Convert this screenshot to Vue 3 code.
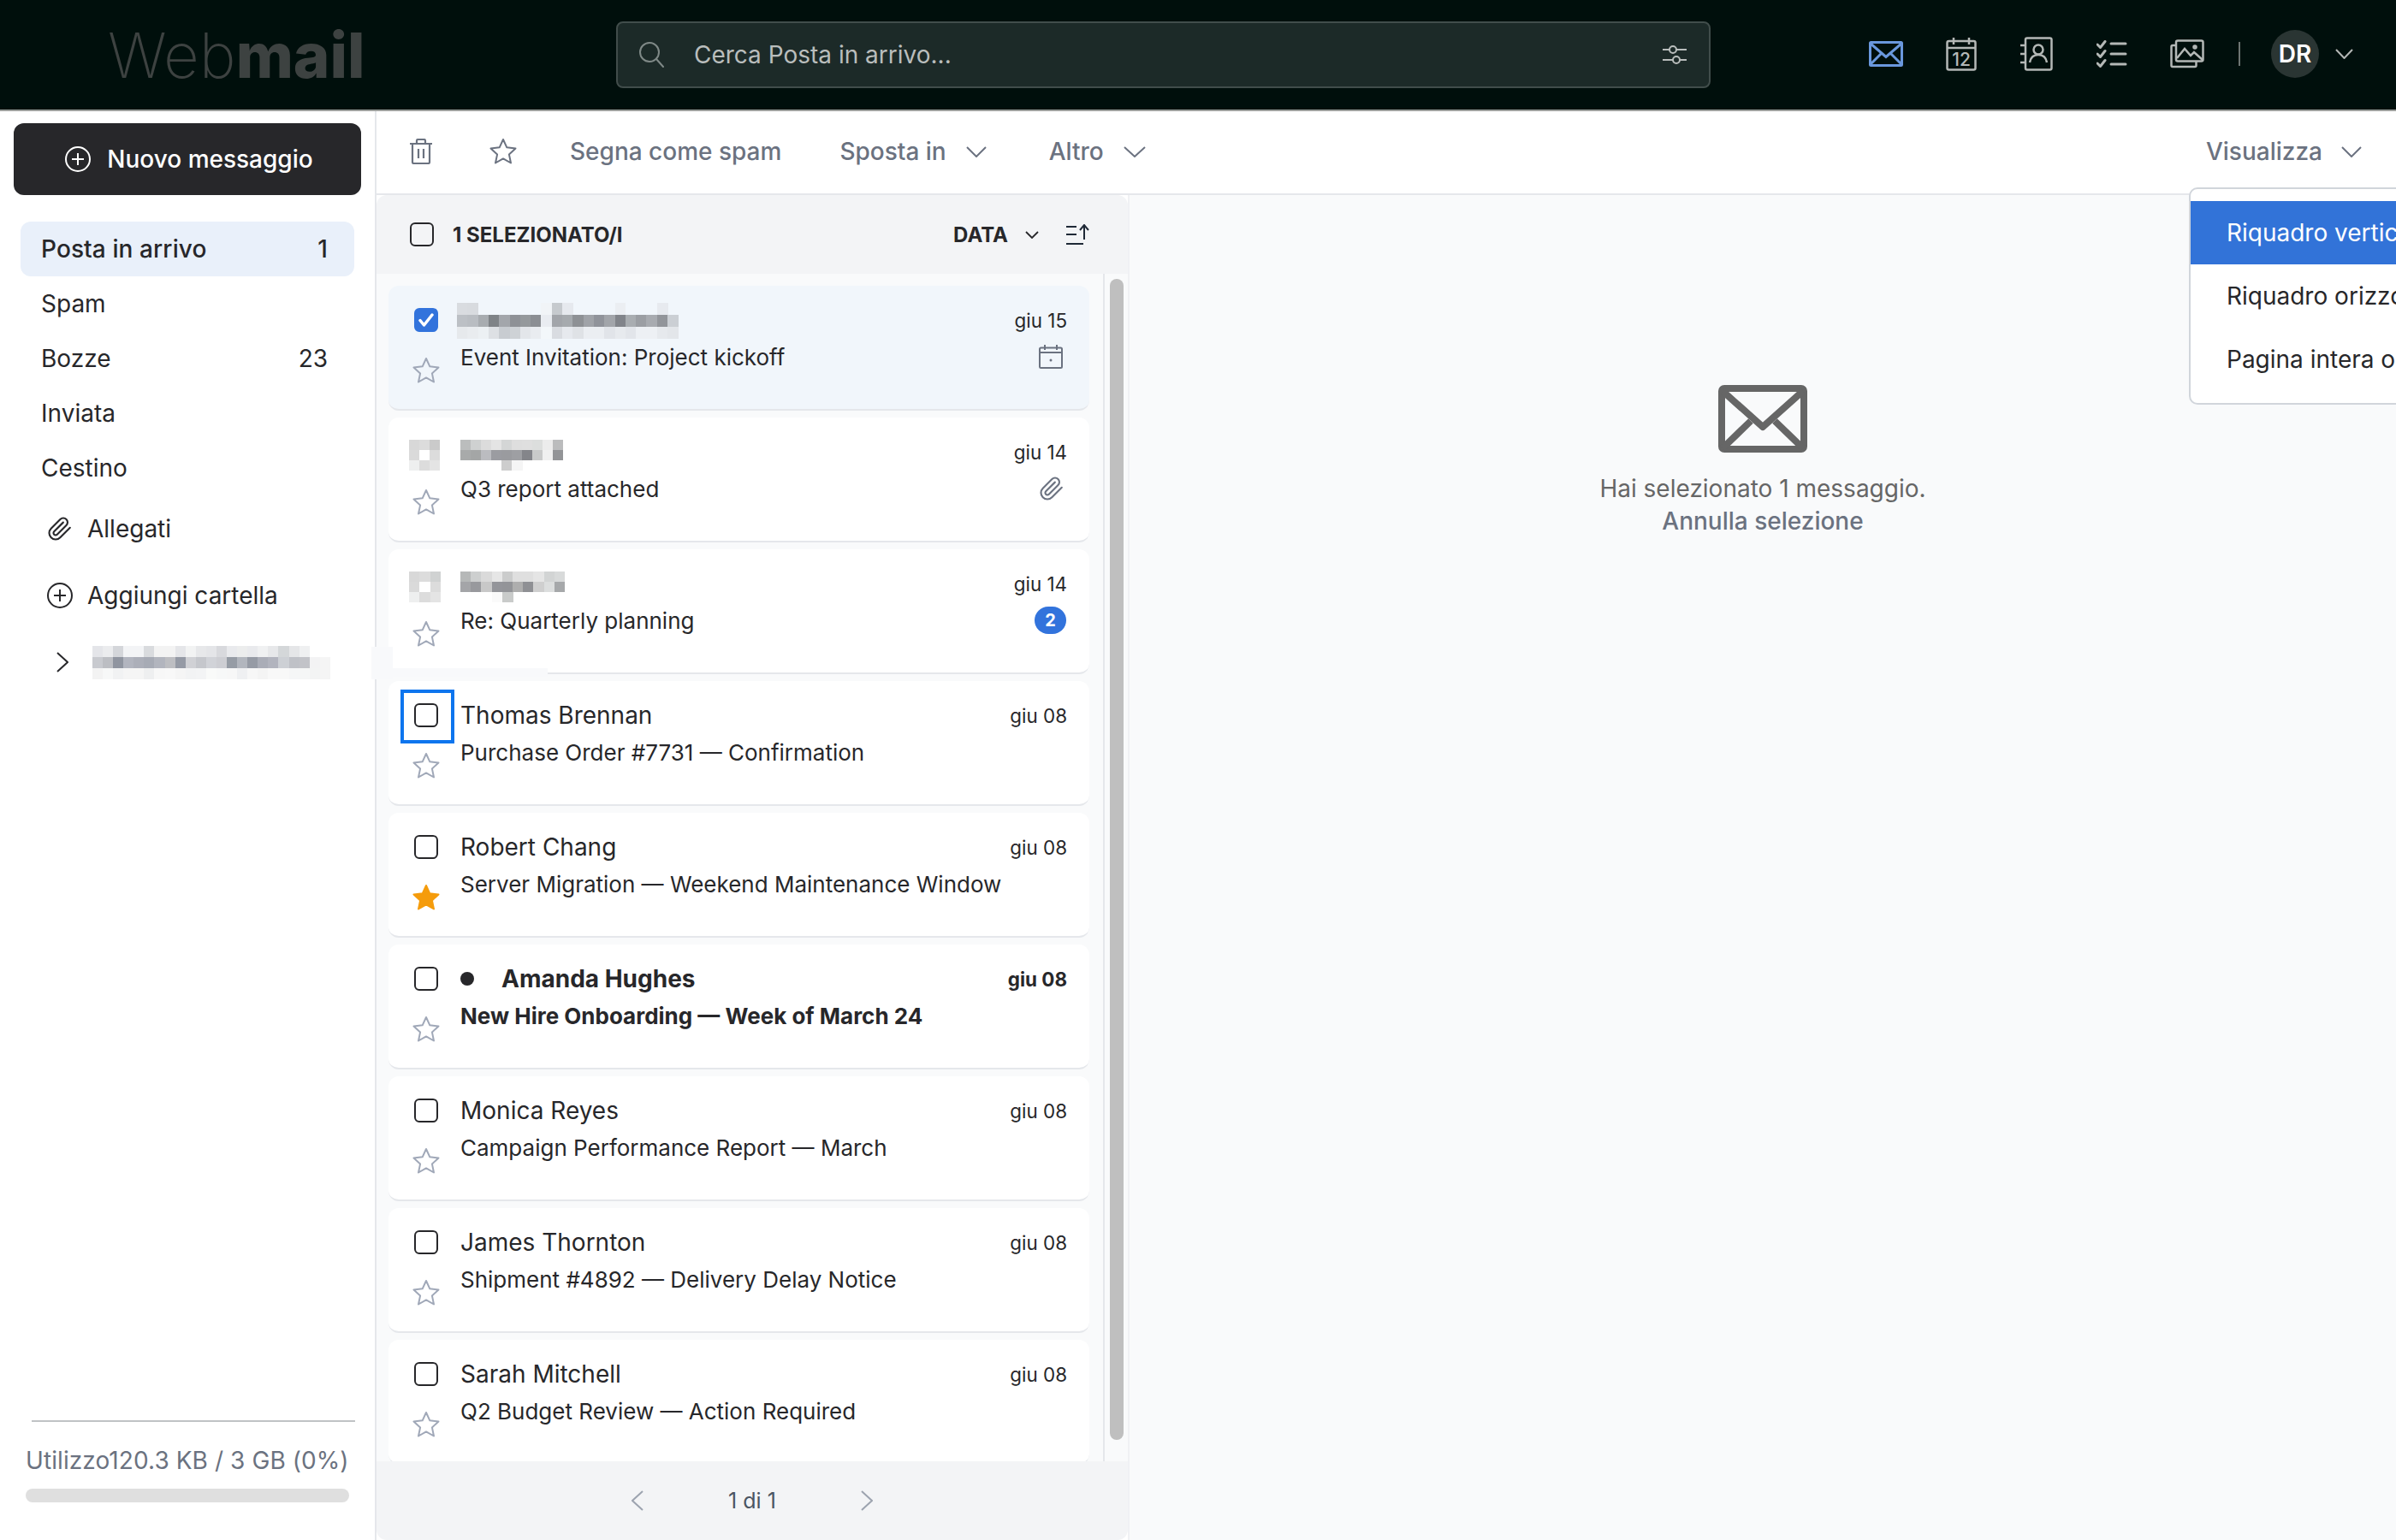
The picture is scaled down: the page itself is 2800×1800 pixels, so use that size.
<template>
  <div class="app">
    <header class="topbar">
      <div class="logo"><span class="logo-thin">Web</span><span class="logo-bold">mail</span></div>
      <div class="search">
        <svg class="search-icon" width="30" height="30" viewBox="0 0 30 30" fill="none" stroke="#7f8987" stroke-width="2">
          <circle cx="13" cy="12" r="11" />
          <path d="M21 20l8 9" stroke-linecap="round" />
        </svg>
        <span class="search-text">Cerca Posta in arrivo...</span>
        <svg class="filter-icon" width="28" height="28" viewBox="0 0 28 28" fill="none" stroke="#b9bdbc" stroke-width="2">
          <path d="M0 8h8M16 8h12M0 20h12M20 20h8" />
          <circle cx="12" cy="8" r="4" />
          <circle cx="16" cy="20" r="4" />
        </svg>
      </div>
      <div class="apps">
        <div class="app-cell">
          <svg width="40" height="30" viewBox="0 0 40 30" fill="none" stroke="#6a98dd" stroke-width="3">
            <rect x="1.5" y="1.500" width="37" height="27" rx="1" />
            <path d="M2 3l18 15.500L38 3M2 27l13-13M38 27L25 14" />
          </svg>
        </div>
        <div class="app-cell">
          <svg width="36" height="40" viewBox="0 0 36 40" fill="none" stroke="#b4b8b6" stroke-width="2.500">
            <rect x="1.500" y="5" width="33" height="33.500" rx="2" />
            <path d="M1.500 13h33M9 1v8M27 1v8" />
            <text x="18" y="34" class="cal-num" text-anchor="middle">12</text>
          </svg>
        </div>
        <div class="app-cell">
          <svg width="38" height="40" viewBox="0 0 38 40" fill="none" stroke="#b4b8b6" stroke-width="2.500">
            <rect x="6" y="1.500" width="30.500" height="37" rx="2" />
            <path d="M0 10h6M0 20h6M0 30h6" />
            <circle cx="21" cy="15" r="5.500" />
            <path d="M11 30c1-6 5-9 10-9s9 3 10 9" />
          </svg>
        </div>
        <div class="app-cell">
          <svg width="36" height="32" viewBox="0 0 36 32" fill="none" stroke="#b4b8b6" stroke-width="3" stroke-linecap="round" stroke-linejoin="round">
            <path d="M1 5l3.500 3.500L10 1.500M1 16l3.500 3.500L10 12.500M1 27l3.500 3.500L10 23.500" />
            <path d="M17 4h17M17 16h17M17 28h17" />
          </svg>
        </div>
        <div class="app-cell">
          <svg width="40" height="34" viewBox="0 0 40 34" fill="none" stroke="#b4b8b6" stroke-width="2.500">
            <rect x="7" y="1.500" width="31.500" height="24" rx="2" />
            <path d="M7 7H3a1.500 1.500 0 0 0-1.500 1.500v22A1.500 1.500 0 0 0 3 32h26a1.500 1.500 0 0 0 1.500-1.500v-5" />
            <path d="M8 22l9-11 7 8 4-4 10 9" />
            <circle cx="29" cy="9" r="1.500" />
          </svg>
        </div>
        <div class="divider"></div>
        <div class="avatar">DR</div>
        <svg class="avatar-chev" width="21" height="12" viewBox="0 0 21 12" fill="none" stroke="#b4b8b6" stroke-width="2">
          <path d="M1 1l9.500 10L20 1" />
        </svg>
      </div>
    </header>

    <div class="body">
      <aside class="sidebar">
        <button class="compose">
          <svg width="30" height="30" viewBox="0 0 30 30" fill="none" stroke="#fff" stroke-width="2">
            <circle cx="15" cy="15" r="14" />
            <path d="M15 8v14M8 15h14" />
          </svg>
          <span>Nuovo messaggio</span>
        </button>

        <nav class="folders">
          <div v-for="f in folders" :key="f.name" class="folder" :class="{ active: f.active }">
            <span>{{ f.name }}</span>
            <span v-if="f.count">{{ f.count }}</span>
          </div>
        </nav>

        <div class="folder-extra">
          <svg class="clip-icon" width="30" height="30" viewBox="0 0 24 24" fill="none" stroke="#27272a" stroke-width="1.700" stroke-linecap="round" stroke-linejoin="round">
            <path :d="clipPath" />
          </svg>
          <span>Allegati</span>
        </div>
        <div class="folder-extra">
          <svg class="extra-icon" width="30" height="30" viewBox="0 0 30 30" fill="none" stroke="#27272a" stroke-width="2">
            <circle cx="15" cy="15" r="14" />
            <path d="M15 8v14M8 15h14" />
          </svg>
          <span>Aggiungi cartella</span>
        </div>
        <div class="folder-extra account">
          <svg class="account-chev" width="14" height="24" viewBox="0 0 14 24" fill="none" stroke="#27272a" stroke-width="2">
            <path d="M1 1l12 11L1 23" />
          </svg>
          <svg class="mosaic" :width="mosaicAccount.width" :height="mosaicAccount.height" shape-rendering="crispEdges">
            <rect v-for="c in mosaicAccount.cells" :key="c.key" :x="c.x" :y="c.y" :width="c.w" :height="c.h" :fill="c.fill" />
          </svg>
        </div>

        <div class="quota">
          <div class="quota-line"></div>
          <div class="quota-text">Utilizzo120.3 KB / 3 GB (0%)</div>
          <div class="quota-bar"></div>
        </div>
      </aside>

      <main class="main">
        <div class="toolbar">
          <svg class="tb-trash" width="26" height="30" viewBox="0 0 26 30" fill="none" stroke="#6b7280" stroke-width="2.200">
            <path d="M0 6h26M8 6V2.500A1.500 1.500 0 0 1 9.500 1h7A1.500 1.500 0 0 1 18 2.500V6" />
            <path d="M3 6v21.500A1.500 1.500 0 0 0 4.500 29h17a1.500 1.500 0 0 0 1.500-1.500V6" />
            <path d="M10 12v11M16 12v11" />
          </svg>
          <svg class="tb-star" width="32" height="32" viewBox="0 0 32 32" fill="none" stroke="#6b7280" stroke-width="2" stroke-linejoin="round">
            <path :d="starPath" />
          </svg>
          <span class="tb-item tb-spam">Segna come spam</span>
          <span class="tb-item tb-move">Sposta in</span>
          <svg class="tb-chev" width="24" height="13" viewBox="0 0 24 13" fill="none" stroke="#6b7280" stroke-width="2"><path d="M1 1l11 11L23 1" /></svg>
          <span class="tb-item tb-more">Altro</span>
          <svg class="tb-chev" width="26" height="13" viewBox="0 0 26 13" fill="none" stroke="#6b7280" stroke-width="2"><path d="M1 1l12 11L25 1" /></svg>
          <span class="tb-item tb-view">Visualizza</span>
          <svg class="tb-chev view-chev" width="24" height="13" viewBox="0 0 24 13" fill="none" stroke="#6b7280" stroke-width="2"><path d="M1 1l11 11L23 1" /></svg>
        </div>

        <div class="content">
          <section class="list-pane">
            <div class="list-head">
              <span class="checkbox"></span>
              <span class="selected-label">1 SELEZIONATO/I</span>
              <span class="sort-label">DATA</span>
              <svg class="sort-chev" width="16" height="9" viewBox="0 0 16 9" fill="none" stroke="#27272a" stroke-width="1.800"><path d="M1 1l7 7 7-7" /></svg>
              <svg class="sort-icon" width="27" height="24" viewBox="0 0 27 24" fill="none" stroke="#1f2937" stroke-width="2">
                <path d="M0 3h12M0 12h12M0 23h20M21 18V2M16 7l5-6 5 6" />
              </svg>
            </div>

            <div class="list-wrap">
              <div class="cards">
                <article v-for="m in messages" :key="m.id" class="card" :class="{ selected: m.selected, unread: m.unread }">
                  <div class="card-side">
                    <span v-if="m.selected" class="checkbox checked">
                      <svg width="18" height="16" viewBox="0 0 18 16" fill="none" stroke="#fff" stroke-width="3.500" stroke-linecap="round" stroke-linejoin="round"><path d="M2 8.500L6.500 14 16 2" /></svg>
                    </span>
                    <svg v-else-if="m.avatar" class="mosaic avatar-mosaic" :width="m.avatar.width" :height="m.avatar.height" shape-rendering="crispEdges">
                      <rect v-for="c in m.avatar.cells" :key="c.key" :x="c.x" :y="c.y" :width="c.w" :height="c.h" :fill="c.fill" />
                    </svg>
                    <span v-else class="checkbox" :class="{ focused: m.focused }"></span>
                    <svg class="star" width="32" height="32" viewBox="0 0 32 32" :fill="m.starred ? '#f59c0c' : 'none'" :stroke="m.starred ? '#f59c0c' : '#a0a8b8'" stroke-width="2" stroke-linejoin="round">
                      <path :d="starPath" />
                    </svg>
                  </div>
                  <div class="card-main">
                    <div class="card-row">
                      <svg v-if="m.mosaic" class="mosaic sender-mosaic" :class="'sender-' + m.id" :width="m.mosaic.width" :height="m.mosaic.height" shape-rendering="crispEdges">
                        <rect v-for="c in m.mosaic.cells" :key="c.key" :x="c.x" :y="c.y" :width="c.w" :height="c.h" :fill="c.fill" />
                      </svg>
                      <span v-else class="sender"><i v-if="m.unread" class="dot"></i>{{ m.sender }}</span>
                      <span class="date">{{ m.date }}</span>
                    </div>
                    <div class="card-row subject-row">
                      <span class="subject">{{ m.subject }}</span>
                      <svg v-if="m.icon === 'calendar'" class="row-calendar" width="28" height="28" viewBox="0 0 28 28" fill="none" stroke="#6b7280" stroke-width="2">
                        <rect x="1" y="3.500" width="26" height="23.500" rx="1.500" />
                        <path d="M1 9h26M7 0v6M21 0v6" />
                        <circle cx="14" cy="18" r="1.500" fill="#6b7280" stroke="none" />
                      </svg>
                      <svg v-if="m.icon === 'clip'" class="row-clip" width="30" height="30" viewBox="0 0 24 24" fill="none" stroke="#6b7280" stroke-width="1.700" stroke-linecap="round" stroke-linejoin="round">
                        <path :d="clipPath" />
                      </svg>
                      <span v-if="m.badge" class="badge">{{ m.badge }}</span>
                    </div>
                  </div>
                </article>
              </div>
              <div class="scrollbar"><div class="thumb"></div></div>
            </div>

            <div class="pager">
              <svg width="14" height="24" viewBox="0 0 14 24" fill="none" stroke="#9ca3af" stroke-width="2"><path d="M13 1L1 12l12 11" /></svg>
              <span class="pager-text">1 di 1</span>
              <svg width="14" height="24" viewBox="0 0 14 24" fill="none" stroke="#9ca3af" stroke-width="2"><path d="M1 1l12 11L1 23" /></svg>
            </div>
          </section>

          <section class="detail">
            <svg width="104" height="80" viewBox="0 0 104 80" fill="none" stroke="#666" stroke-width="8">
              <rect x="4" y="4" width="96" height="71" rx="3" />
              <path d="M5 7l47 42L99 7" stroke-linejoin="round" />
              <path d="M5 74l33-32M99 74L66 42" />
            </svg>
            <p class="detail-text">Hai selezionato 1 messaggio.</p>
            <p class="detail-link">Annulla selezione</p>
          </section>
        </div>
      </main>
    </div>

    <div class="view-menu">
      <div class="view-item current">Riquadro verticale</div>
      <div class="view-item">Riquadro orizzontale</div>
      <div class="view-item">Pagina intera orizzontale</div>
    </div>

    <div class="smear smear-a"></div>
    <div class="smear smear-b"></div>
  </div>
</template>

<script setup>
const starPath = 'M16 2l4.300 9.300 10.200 1.200-7.600 6.900 2.100 10.100L16 24.400l-9 5.100 2.100-10.100-7.600-6.900 10.200-1.200z'
const clipPath = 'm21.440 11.050-9.190 9.190a6 6 0 0 1-8.490-8.490l8.570-8.570A4 4 0 1 1 18 8.840l-8.590 8.570a2 2 0 0 1-2.830-2.830l8.490-8.480'

// builds the rects of a pixelated (redacted) name from rows of hex cells, "-" means empty
const mosaic = (rows, cellW, cellH) => {
  const cells = []
  rows.forEach((row, r) => {
    row.split(' ').forEach((hex, c) => {
      if (hex !== '-') {
        cells.push({ key: r + '-' + c, x: c * cellW, y: r * cellH, w: cellW + 0.5, h: cellH, fill: '#' + hex })
      }
    })
  })
  return { cells, width: Math.ceil(rows[0].split(' ').length * cellW), height: rows.length * cellH }
}

const folders = [
  { name: 'Posta in arrivo', count: 1, active: true },
  { name: 'Spam' },
  { name: 'Bozze', count: 23 },
  { name: 'Inviata' },
  { name: 'Cestino' }
]

const mosaicAccount = mosaic([
  'e4e5e9 ebecee d4d6da f3f4f6 f3f4f6 d9dbde f3f3f3 f3f3f3 e5e6e9 f2f3f3 e7e8ea e4e5e8 d8d9dd e9eaed eceded e9eaed f0f1f2 e7e8ea d4d7d9 e5e6e8 eff0f1 - -',
  'c8cacf bcbec3 9095a0 b2b5bf acafb9 a7abb5 b2b5be bdbec2 959aa5 d0d1d5 c5c7cc d1d3d8 cdced3 969ca5 b2b6be 969ba5 aaadb7 b2b4be cdd0d5 bfc1c7 c2c3c8 f3f3f4 f5f5f5',
  'f3f3f3 f7f8f8 f1f2f3 f5f5f5 f5f5f5 eeeff0 f7f7f7 f8f8f8 f5f5f5 f2f3f4 f3f4f5 f9faf9 f7f8f8 f7f7f7 eff0f2 f7f7f7 f4f4f4 f8f8f8 f8f8f8 f5f6f7 f5f6f6 f3f4f4 f5f5f5'
], 12.08, 13)

const messages = [
  {
    id: 1, selected: true, date: 'giu 15', subject: 'Event Invitation: Project kickoff', icon: 'calendar',
    mosaic: mosaic([
      'd9dce0 d8dbdf - - - - - - f1f4f7 c6cace e6e9ee - - - - ebeef2 - - - e7eaef -',
      'bcc0c5 b9bdc2 a8acb0 7f8387 a3a6ab 8e9196 95999c 8b8e93 e9ecf1 a2a5aa a6aaae 8e9195 a0a3a8 90939a a2a5aa 81848a a9adb1 9b9ea3 a8abb0 92959a cbcfd4',
      'e6e9ec e9ecef ecf0f3 dde0e4 c8ccd1 ced2d6 e3e6ea e9ecf0 f3f7fa d9dce1 e6e9ee dfe2e6 ebeef2 ebeef2 e1e4e9 e7eaee e2e5ea edf0f4 edf0f4 e6e9ed e3e6ea'
    ], 12.3, 14)
  },
  {
    id: 2, date: 'giu 14', subject: 'Q3 report attached', icon: 'clip',
    avatar: mosaic(['d8d8d8 dcdcdc cacaca', 'dadada ffffff dcdcdc', 'eeefef dcdcdc e4e4e4'], 12, 12),
    mosaic: mosaic([
      'bbbdbd cfd1d1 dcdcdc e4e4e4 d4d6d6 dedede dfdfdf dcdedd ececec bbbcbd',
      'a8aaaa a4a6a6 bbbcc0 9b9ca1 9a9b9f 9e9fa3 84858a c9caca f0f0f0 939497',
      '- - - - cdcdcd f5f5f5 - - - -'
    ], 12, 12)
  },
  {
    id: 3, date: 'giu 14', subject: 'Re: Quarterly planning', badge: 2,
    avatar: mosaic(['d8d8d8 dcdcdc d0d2d2', 'dadada ffffff dcdcdc', 'eeefef dcdcdc e4e4e4'], 12.3, 12),
    mosaic: mosaic([
      'b6b8b8 cdcfcf dadada e6e6e6 cbcccc dfdfdf dfdfdf e5e5e5 d2d4d4 d8dada',
      'a4a5a8 98999d c8c8c8 94959a 939498 aeaeae 8f9094 cfcfcf dcdede a6a8aa',
      '- - - fafafa c9cbca - - - - -'
    ], 12.2, 12)
  },
  { id: 4, sender: 'Thomas Brennan', date: 'giu 08', subject: 'Purchase Order #7731 — Confirmation', focused: true },
  { id: 5, sender: 'Robert Chang', date: 'giu 08', subject: 'Server Migration — Weekend Maintenance Window', starred: true },
  { id: 6, sender: 'Amanda Hughes', date: 'giu 08', subject: 'New Hire Onboarding — Week of March 24', unread: true },
  { id: 7, sender: 'Monica Reyes', date: 'giu 08', subject: 'Campaign Performance Report — March' },
  { id: 8, sender: 'James Thornton', date: 'giu 08', subject: 'Shipment #4892 — Delivery Delay Notice' },
  { id: 9, sender: 'Sarah Mitchell', date: 'giu 08', subject: 'Q2 Budget Review — Action Required' }
]
</script>

<style>
html, body {
  margin: 0;
  overflow: hidden;
}
</style>

<style scoped>
.app {
  position: relative;
  width: 100vw;
  height: 100vh;
  overflow: hidden;
  display: flex;
  flex-direction: column;
  background: #fff;
  color: #27272a;
  font-family: Inter, "Liberation Sans", sans-serif;
  font-size: 28px;
}

.topbar {
  flex: none;
  box-sizing: border-box;
  height: 130px;
  display: flex;
  align-items: center;
  padding-bottom: 2px;
  background: #000f0c;
  border-bottom: 2px solid #9c9f9c;
}

.logo {
  width: 593px;
  margin-top: 4px;
  padding-left: 126px;
  padding-right: 1px;
  box-sizing: content-box;
  font-size: 72.5px;
  line-height: 1;
  color: #3d4241;
  white-space: nowrap;
}

.logo-thin { font-weight: 200; }
.logo-bold { font-weight: 800; }

.search {
  box-sizing: border-box;
  width: 1279px;
  height: 78px;
  margin-top: 2px;
  display: flex;
  align-items: center;
  padding: 0 26px 0 24px;
  background: #1c2a28;
  border: 2px solid #414d4b;
  border-radius: 8px;
}

.search-text {
  margin-left: 35px;
  color: #b9bdbc;
}

.filter-icon {
  margin-left: auto;
}

.apps {
  margin-left: auto;
  display: flex;
  align-items: center;
  padding-right: 50px;
}

.app-cell {
  width: 88px;
  display: flex;
  justify-content: center;
}

.cal-num {
  font-size: 21px;
  font-weight: 500;
  fill: #b4b8b6;
  stroke: none;
}

.divider {
  width: 2px;
  height: 28px;
  margin-left: 16px;
  margin-right: -1px;
  background: #6d7472;
}

.avatar {
  width: 56px;
  height: 56px;
  margin-left: 37px;
  display: flex;
  align-items: center;
  justify-content: center;
  border-radius: 50%;
  background: #2a3533;
  color: #fff;
  font-weight: 600;
}

.avatar-chev {
  margin-left: 19px;
}

.body {
  flex: 1;
  display: flex;
  min-height: 0;
}

.sidebar {
  flex: none;
  box-sizing: border-box;
  width: 440px;
  display: flex;
  flex-direction: column;
  border-right: 2px solid #e5e7eb;
}

.compose {
  box-sizing: border-box;
  width: 406px;
  height: 84px;
  margin: 14px 0 0 16px;
  padding: 0 0 0 4px;
  display: flex;
  align-items: center;
  justify-content: center;
  gap: 19px;
  border: none;
  border-radius: 12px;
  background: #27272a;
  color: #fff;
  font-family: inherit;
  font-size: 28px;
  font-weight: 500;
}

.folders {
  margin-top: 31px;
}

.folder {
  box-sizing: border-box;
  width: 390px;
  height: 64px;
  margin-left: 24px;
  padding: 0 31px 0 24px;
  display: flex;
  align-items: center;
  justify-content: space-between;
  border-radius: 12px;
}

.folder.active {
  background: #e9f0fa;
  font-weight: 500;
  letter-spacing: 0.1px;
}

.folder-extra {
  height: 78px;
  display: flex;
  align-items: center;
}

.clip-icon {
  margin-left: 55px;
  margin-right: 17px;
}

.extra-icon {
  margin-left: 55px;
  margin-right: 17px;
}

.account-chev {
  margin-left: 66px;
  margin-right: 28px;
}

.quota {
  margin-top: auto;
  padding: 0 30px 44px 30px;
}

.quota-line {
  height: 2px;
  margin: 0 -7px 0 7px;
  background: #c0c3c5;
}

.quota-text {
  margin-top: 28px;
  line-height: 34px;
  color: #6b7280;
  letter-spacing: 0.08px;
  white-space: nowrap;
}

.quota-bar {
  height: 16px;
  margin-top: 16px;
  border-radius: 8px;
  background: #dfdfdf;
}

.main {
  flex: 1;
  min-width: 0;
  display: flex;
  flex-direction: column;
}

.toolbar {
  flex: none;
  box-sizing: border-box;
  height: 98px;
  display: flex;
  align-items: center;
  padding: 0 40px 2px 39px;
  border-bottom: 2px solid #e5e7eb;
}

.tb-star { margin-left: 67px; }

.tb-item {
  color: #6b7280;
  font-weight: 500;
}

.tb-spam { margin-left: 62px; }
.tb-move { margin-left: 68px; }
.tb-more { margin-left: 73px; }
.tb-view { margin-left: auto; }
.tb-chev { margin-left: 23px; }
.tb-chev.view-chev { margin-left: 22px; }

.content {
  flex: 1;
  display: flex;
  min-height: 0;
}

.list-pane {
  flex: none;
  width: 878px;
  display: flex;
  flex-direction: column;
  border-right: 2px solid #f0f1f4;
}

.list-head {
  flex: none;
  height: 92px;
  display: flex;
  align-items: center;
  padding: 0 45px 0 39px;
  background: #f3f4f6;
  border-radius: 12px 12px 0 0;
}

.checkbox {
  flex: none;
  box-sizing: border-box;
  position: relative;
  width: 28px;
  height: 28px;
  display: flex;
  align-items: center;
  justify-content: center;
  border: 2px solid #27272a;
  border-radius: 6px;
}

.checkbox.checked {
  background: #3273dc;
  border-color: #3273dc;
}

.checkbox.focused::after {
  content: "";
  position: absolute;
  top: -18px;
  left: -18px;
  width: 55px;
  height: 55px;
  border: 4px solid #0d75ee;
}

.selected-label {
  margin-left: 22px;
  font-size: 24px;
  font-weight: 700;
}

.sort-label {
  margin-left: auto;
  font-size: 24px;
  font-weight: 700;
}

.sort-chev { margin-left: 20px; }
.sort-icon { margin-left: 32px; }

.list-wrap {
  flex: 1;
  display: flex;
  min-height: 0;
  background: #f9fafb;
}

.cards {
  flex: none;
  box-sizing: border-box;
  width: 849px;
  padding: 14px 16px 0 14px;
  overflow: hidden;
}

.card {
  box-sizing: border-box;
  height: 146px;
  margin-bottom: 8px;
  padding: 0 28px 0 24px;
  display: flex;
  background: #fff;
  border-bottom: 2px solid #e5e7eb;
  border-radius: 12px;
}

.card.selected {
  background: #f1f6fb;
}

.card-side {
  flex: none;
  width: 60px;
  box-sizing: border-box;
  display: flex;
  flex-direction: column;
  padding-left: 6px;
  padding-top: 26px;
}

.avatar-mosaic {
  margin-left: -6px;
  margin-bottom: -8px;
}

.star {
  margin-top: 29px;
  margin-left: -2px;
}

.card-main {
  flex: 1;
  min-width: 0;
}

.card-row {
  display: flex;
  align-items: center;
  justify-content: space-between;
  height: 42px;
  margin-top: 19px;
}

.subject-row {
  margin-top: 1px;
}

.sender {
  display: flex;
  align-items: center;
}

.sender-1 {
  margin-left: -4px;
  margin-top: 2px;
}

.sender-2,
.sender-3 {
  margin-top: 8px;
}

.dot {
  width: 16px;
  height: 16px;
  margin-right: 32px;
  border-radius: 50%;
  background: #27272a;
}

.date {
  margin-right: -2px;
  font-size: 22.4px;
}

.subject {
  font-size: 26px;
  white-space: nowrap;
}

.row-calendar {
  margin-right: 3px;
}

.row-clip {
  margin-right: 1px;
}

.unread .sender,
.unread .subject,
.unread .date {
  font-weight: 700;
}

.badge {
  width: 37px;
  height: 32px;
  margin-right: -1px;
  display: flex;
  align-items: center;
  justify-content: center;
  border-radius: 16px;
  background: #3273dc;
  color: #fff;
  font-size: 20px;
  font-weight: 700;
}

.scrollbar {
  flex: none;
  box-sizing: border-box;
  width: 29px;
  padding: 6px 0 0 6px;
  border-left: 2px solid #e5e7eb;
}

.thumb {
  width: 16px;
  height: 1357px;
  border-radius: 8px;
  background: #bfbfbf;
}

.pager {
  flex: none;
  height: 92px;
  display: flex;
  align-items: center;
  justify-content: center;
  gap: 99px;
  background: #f3f4f6;
  border-radius: 0 0 12px 12px;
}

.pager-text {
  font-size: 25px;
  color: #4b5563;
}

.detail {
  flex: 1;
  min-width: 0;
  box-sizing: border-box;
  display: flex;
  flex-direction: column;
  align-items: center;
  padding-top: 222px;
  background: #f9fafb;
}

.detail p {
  margin: 0;
  line-height: 38px;
}

.detail .detail-text {
  margin-top: 22px;
  color: #666;
}

.detail-link {
  color: #6b7280;
  font-weight: 500;
}

.view-menu {
  position: absolute;
  top: 219px;
  left: 2558px;
  box-sizing: border-box;
  width: 420px;
  height: 254px;
  padding-top: 14px;
  background: #fff;
  border: 2px solid #d1d5db;
  border-radius: 10px;
}

.view-item {
  height: 74px;
  padding-left: 42px;
  display: flex;
  align-items: center;
  white-space: nowrap;
}

.view-item.current {
  background: #3273d8;
  color: #fff;
}

.smear {
  position: absolute;
  background: #f8f9fb;
}

.smear-a {
  top: 756px;
  left: 434px;
  width: 25px;
  height: 38px;
}

.smear-b {
  top: 781px;
  left: 459px;
  width: 181px;
  height: 10px;
}
</style>
